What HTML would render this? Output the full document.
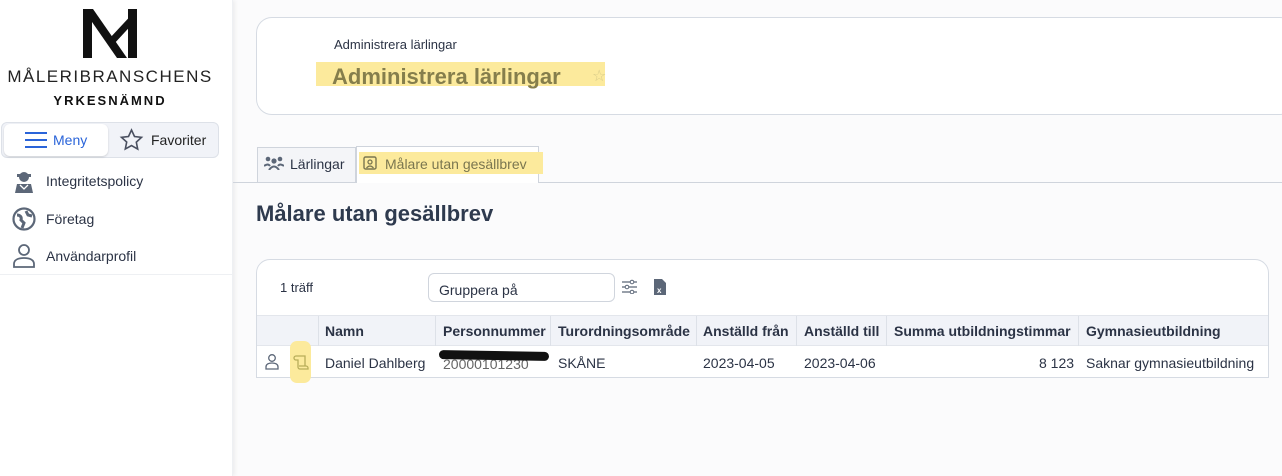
<!DOCTYPE html>
<html><head><meta charset="utf-8"><style>
*{box-sizing:border-box;margin:0;padding:0}
body{width:1282px;height:476px;overflow:hidden;background:#fbfbfc;font-family:"Liberation Sans","DejaVu Sans",sans-serif;color:#2b3345;position:relative}
.side{position:absolute;left:0;top:0;width:233px;height:476px;background:#fff;box-shadow:2px 0 4px rgba(0,0,0,.06);border-right:1px solid #eef0f3}
.abs{position:absolute}
.hl{background:#fbe58a;position:absolute}
</style></head><body>
<div class="side">
  <svg class="abs" style="left:83px;top:9px" width="54" height="49" viewBox="0 0 54 49"><rect x="0" y="0" width="9" height="49" fill="#111"/><rect x="45" y="0" width="9" height="49" fill="#111"/><path d="M0 0h10l34 49H34z" fill="#111"/><path d="M54 0v10L30 36l-4-6z" fill="#111"/></svg>
  <div class="abs" style="left:0;width:220px;top:67px;text-align:center;font-size:17px;letter-spacing:1.5px;color:#222">MÅLERIBRANSCHENS</div>
  <div class="abs" style="left:0;width:220px;top:93px;text-align:center;font-size:13px;font-weight:bold;letter-spacing:2px;color:#111">YRKESNÄMND</div>
  <div class="abs" style="left:1px;top:122px;width:218px;height:36px;background:#f1f3f8;border:1px solid #dde1e8;border-radius:6px"></div>
  <div class="abs" style="left:4px;top:124px;width:104px;height:32px;background:#fff;border-radius:6px;box-shadow:0 1px 2px rgba(0,0,0,.15)"></div>
  <svg class="abs" style="left:25px;top:132px" width="22" height="16"><path d="M0 1h22M0 8h22M0 15h22" stroke="#2a64d9" stroke-width="2"/></svg>
  <div class="abs" style="left:53px;top:132px;font-size:14px;color:#2a64d9">Meny</div>
  <svg class="abs" style="left:119px;top:128px" width="25" height="24" viewBox="0 0 24 24"><path d="M12 2l3 6.5 7 .8-5.2 4.8 1.4 7L12 17.6 5.8 21l1.4-7L2 9.3l7-.8z" fill="none" stroke="#4a5060" stroke-width="1.6"/></svg>
  <div class="abs" style="left:151px;top:132px;font-size:14px;color:#222">Favoriter</div>
  <svg class="abs" style="left:13px;top:169px" width="22" height="24" viewBox="0 0 22 24"><circle cx="11" cy="8" r="5" fill="#5c6778"/><rect x="4" y="5" width="14" height="3" fill="#5c6778"/><path d="M2 24l2-9h14l2 9z" fill="#5c6778"/><path d="M7 16l4 4 4-4" stroke="#fff" stroke-width="1.3" fill="none"/></svg>
  <div class="abs" style="left:46px;top:173px;font-size:14px">Integritetspolicy</div>
  <svg class="abs" style="left:12px;top:207px" width="24" height="24"><circle cx="12" cy="12" r="10.5" fill="none" stroke="#5c6778" stroke-width="2.2"/><path d="M5 8c3 0 5 2 4 5l3 3-2 5M14 4l2 4 4 1" fill="none" stroke="#5c6778" stroke-width="3"/></svg>
  <div class="abs" style="left:46px;top:211px;font-size:14px">Företag</div>
  <svg class="abs" style="left:13px;top:244px" width="22" height="24"><circle cx="11" cy="6" r="5" fill="none" stroke="#5c6778" stroke-width="1.8"/><path d="M1 23v-3c0-4 4-6 10-6s10 2 10 6v3z" fill="none" stroke="#5c6778" stroke-width="1.8"/></svg>
  <div class="abs" style="left:46px;top:248px;font-size:14px">Användarprofil</div>
  <div class="abs" style="left:0;top:274px;width:232px;height:1px;background:#eef0f3"></div>
</div>

<div class="abs" style="left:256px;top:17px;width:1040px;height:98px;background:#fff;border:1px solid #d6dbe3;border-radius:16px"></div>
<div class="abs" style="left:334px;top:37px;font-size:13px">Administrera lärlingar</div>
<div class="hl" style="left:316px;top:62px;width:289px;height:24px;background:#fcea9c"></div>
<div class="abs" style="left:332px;top:64px;font-size:22px;font-weight:bold;color:#857e4c">Administrera lärlingar</div>
<div class="abs" style="left:592px;top:66px;font-size:16px;color:#d8cc8a">☆</div>

<div class="abs" style="left:233px;top:182px;width:1049px;height:1px;background:#cfd4dc"></div>
<div class="abs" style="left:257px;top:147px;width:99px;height:36px;background:#f4f5f8;border:1px solid #cfd4dc"></div>
<svg class="abs" style="left:264px;top:156px" width="20" height="14"><circle cx="4" cy="3" r="2.3" fill="#5c6778"/><circle cx="16" cy="3" r="2.3" fill="#5c6778"/><circle cx="10" cy="5" r="2.6" fill="#5c6778"/><path d="M0 10q4-3 6 0M14 10q2-3 6 0M5 14q5-7 10 0" stroke="#5c6778" stroke-width="2" fill="none"/></svg>
<div class="abs" style="left:290px;top:156px;font-size:14px">Lärlingar</div>
<div class="abs" style="left:356px;top:146px;width:183px;height:37px;background:#fff;border:1px solid #cfd4dc;border-bottom:none"></div>
<div class="hl" style="left:359px;top:152px;width:184px;height:22px;background:#fcea9c"></div>
<svg class="abs" style="left:363px;top:156px" width="14" height="14"><rect x="1" y="1" width="12" height="12" rx="1.5" fill="none" stroke="#7a7650" stroke-width="1.4"/><circle cx="7" cy="6" r="2" fill="none" stroke="#7a7650" stroke-width="1.3"/><path d="M3.5 12q3.5-4 7 0" fill="none" stroke="#7a7650" stroke-width="1.3"/></svg>
<div class="abs" style="left:385px;top:156px;font-size:14px;color:#7a7650">Målare utan gesällbrev</div>

<div class="abs" style="left:256px;top:201px;font-size:22px;font-weight:bold;color:#2e3a4e">Målare utan gesällbrev</div>

<div class="abs" style="left:256px;top:259px;width:1013px;height:119px;background:#fff;border:1px solid #d6dbe3;border-radius:14px 14px 0 0"></div>
<div class="abs" style="left:280px;top:280px;font-size:13px">1 träff</div>
<div class="abs" style="left:428px;top:273px;width:187px;height:29px;border:1px solid #d0d5dd;border-radius:6px;background:#fff"></div>
<div class="abs" style="left:439px;top:282px;font-size:14px">Gruppera på</div>
<svg class="abs" style="left:622px;top:279px" width="15" height="15"><path d="M0 3h15M0 8h15M0 13h15" stroke="#5c6778" stroke-width="1.3"/><circle cx="10" cy="3" r="1.8" fill="#fff" stroke="#5c6778"/><circle cx="5" cy="8" r="1.8" fill="#fff" stroke="#5c6778"/><circle cx="10" cy="13" r="1.8" fill="#fff" stroke="#5c6778"/></svg>
<svg class="abs" style="left:654px;top:279px" width="12" height="16"><path d="M0 0h8l4 4v12H0z" fill="#5c6778"/><text x="3" y="14" font-size="8" font-weight="bold" fill="#fff" font-family="Liberation Sans">x</text></svg>

<div class="abs" style="left:257px;top:315px;width:1011px;height:31px;background:#f1f3f8;border-top:1px solid #e3e6ec;border-bottom:1px solid #e3e6ec"></div>
<div class="abs" style="top:316px;left:318px;width:1px;height:30px;background:#dde1e8"></div>
<div class="abs" style="top:316px;left:435px;width:1px;height:30px;background:#dde1e8"></div>
<div class="abs" style="top:316px;left:550px;width:1px;height:30px;background:#dde1e8"></div>
<div class="abs" style="top:316px;left:696px;width:1px;height:30px;background:#dde1e8"></div>
<div class="abs" style="top:316px;left:796px;width:1px;height:30px;background:#dde1e8"></div>
<div class="abs" style="top:316px;left:886px;width:1px;height:30px;background:#dde1e8"></div>
<div class="abs" style="top:316px;left:1078px;width:1px;height:30px;background:#dde1e8"></div>
<div style="font-size:14px;font-weight:bold">
<div class="abs" style="left:325px;top:323px">Namn</div>
<div class="abs" style="left:443px;top:323px">Personnummer</div>
<div class="abs" style="left:558px;top:323px">Turordningsområde</div>
<div class="abs" style="left:703px;top:323px">Anställd från</div>
<div class="abs" style="left:804px;top:323px">Anställd till</div>
<div class="abs" style="left:894px;top:323px">Summa utbildningstimmar</div>
<div class="abs" style="left:1086px;top:323px">Gymnasieutbildning</div>
</div>
<svg class="abs" style="left:265px;top:354px" width="14" height="16"><circle cx="7" cy="4" r="3.3" fill="none" stroke="#5c6778" stroke-width="1.3"/><path d="M1 15v-2c0-3 3-4 6-4s6 1 6 4v2z" fill="none" stroke="#5c6778" stroke-width="1.3"/></svg>
<div class="hl" style="left:290px;top:341px;width:21px;height:42px;border-radius:7px;background:#fcea9c"></div>
<svg class="abs" style="left:292px;top:354px" width="18" height="16"><path d="M4 2h9v10M4 2a2 2 0 0 0 0 4h2v7a2 2 0 0 0 2 2h8v-1a2 2 0 0 0-2-2H7" fill="none" stroke="#b8ad5a" stroke-width="1.3"/></svg>
<div style="font-size:14px">
<div class="abs" style="left:325px;top:355px">Daniel Dahlberg</div>
<div class="abs" style="left:443px;top:356px;color:#666">20000101230</div>
<div class="abs" style="left:439px;top:351px;width:110px;height:9px;background:#111;border-radius:5px;transform:rotate(1deg)"></div>
<div class="abs" style="left:558px;top:355px">SKÅNE</div>
<div class="abs" style="left:703px;top:355px">2023-04-05</div>
<div class="abs" style="left:804px;top:355px">2023-04-06</div>
<div class="abs" style="left:1039px;top:355px">8 123</div>
<div class="abs" style="left:1086px;top:355px">Saknar gymnasieutbildning</div>
</div>
</body></html>
